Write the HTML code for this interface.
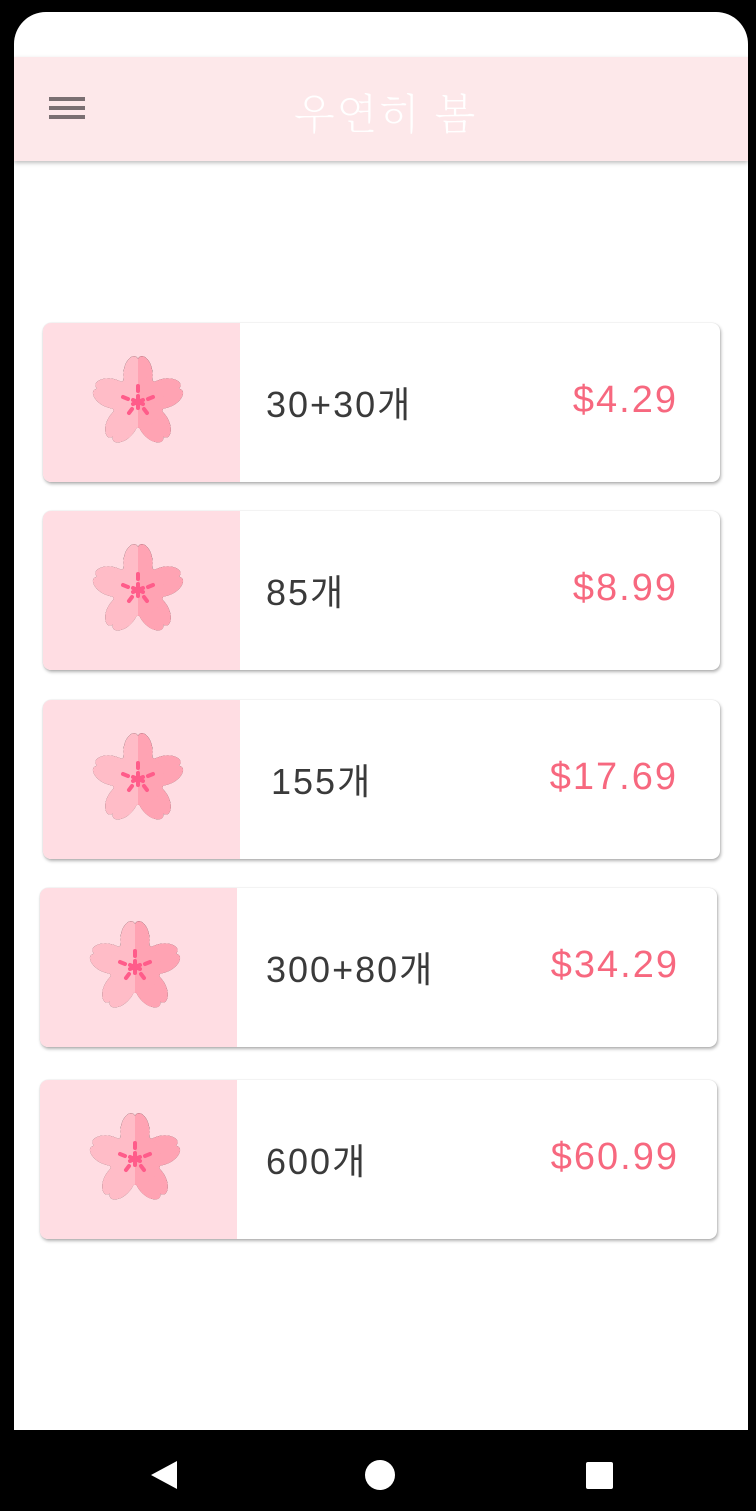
<!DOCTYPE html>
<html><head><meta charset="utf-8"><style>
*{margin:0;padding:0;box-sizing:border-box}
body{width:756px;height:1506px;background:#000;position:relative;overflow:hidden;font-family:"Liberation Sans","Noto Sans CJK KR",sans-serif}
.screen{position:absolute;left:14px;top:12px;width:734px;height:1418px;background:#fff;border-radius:32px 32px 0 0;overflow:hidden}
.hdr{position:absolute;left:0;top:45px;width:734px;height:104px;background:#fde8ea;box-shadow:0 2px 4px rgba(0,0,0,.25)}
.ham{position:absolute;left:35px;top:40px;width:36px}
.ham div{height:4px;background:#7a6f72;margin-bottom:5px}
.title{position:absolute;left:280px;top:25px;font-size:42px;color:#fff;font-family:"Noto Serif CJK SC","WenQuanYi Zen Hei",serif;font-weight:200;letter-spacing:2px}
.card{position:absolute;width:677px;height:159px;background:#fff;border-radius:8px;box-shadow:1px 2px 3px rgba(0,0,0,.3),0 0 1px rgba(0,0,0,.2)}
.img{position:absolute;left:0;top:0;width:197px;height:100%;background:#ffdde3;border-radius:8px 0 0 8px}
.img svg{position:absolute;left:45px;top:29px}
.q{position:absolute;left:223px;top:53px;font-size:36px;color:#3a3a3a;letter-spacing:2px}
.p{position:absolute;right:42px;top:56px;font-size:38px;color:#f7687f;letter-spacing:2px}
.nav{position:absolute;left:0;top:1430px;width:756px;height:76px;background:#000}
</style></head><body>
<svg width="0" height="0" style="position:absolute"><defs>
<g id="fl">
<clipPath id="lh"><rect x="0" y="0" width="50" height="100"/></clipPath>
<clipPath id="rh"><rect x="50" y="0" width="50" height="100"/></clipPath>
<g id="pet"><path d="M50 50 C34 40 32 18 40 8 C44 3 48 3 50 7 C52 3 56 3 60 8 C68 18 66 40 50 50Z"/></g>
<g id="all">
<use href="#pet"/><use href="#pet" transform="rotate(72 50 50)"/><use href="#pet" transform="rotate(144 50 50)"/><use href="#pet" transform="rotate(216 50 50)"/><use href="#pet" transform="rotate(288 50 50)"/>
<circle cx="50" cy="50" r="26"/>
</g>
<use href="#all" fill="#ffbcc7" clip-path="url(#lh)"/>
<use href="#all" fill="#ffa3b3" clip-path="url(#rh)"/>
<g stroke="#ff5c8a" stroke-width="4" stroke-linecap="round">
<line x1="50" y1="39" x2="50" y2="34"/><line x1="40" y1="47" x2="35" y2="45"/><line x1="60" y1="47" x2="65" y2="45"/><line x1="44" y1="57" x2="41" y2="61"/><line x1="56" y1="57" x2="59" y2="61"/>
<line x1="50" y1="44" x2="50" y2="56"/><line x1="45" y1="48" x2="55" y2="52"/><line x1="55" y1="48" x2="45" y2="52"/>
</g>
</g></defs></svg>
<div class="screen">
<div class="hdr"><div class="ham"><div></div><div></div><div></div></div><div class="title">우연히 봄</div></div>
<div class="card" style="left:29px;top:311px"><div class="img"><svg width="100" height="100"><use href="#fl"/></svg></div><div class="q">30+30개</div><div class="p">$4.29</div></div>
<div class="card" style="left:29px;top:499px"><div class="img"><svg width="100" height="100"><use href="#fl"/></svg></div><div class="q">85개</div><div class="p">$8.99</div></div>
<div class="card" style="left:29px;top:688px"><div class="img"><svg width="100" height="100"><use href="#fl"/></svg></div><div class="q" style="left:228px">155개</div><div class="p">$17.69</div></div>
<div class="card" style="left:26px;top:876px"><div class="img"><svg width="100" height="100"><use href="#fl"/></svg></div><div class="q" style="left:226px">300+80개</div><div class="p" style="right:38px">$34.29</div></div>
<div class="card" style="left:26px;top:1068px"><div class="img"><svg width="100" height="100"><use href="#fl"/></svg></div><div class="q" style="left:226px">600개</div><div class="p" style="right:38px">$60.99</div></div>
</div>
<div class="nav">
<svg width="756" height="76"><polygon points="151,45 177,31 177,59" fill="#fff"/><circle cx="380" cy="45" r="15" fill="#fff"/><rect x="586" y="32" width="27" height="27" rx="2" fill="#fff"/></svg>
</div>
</body></html>
